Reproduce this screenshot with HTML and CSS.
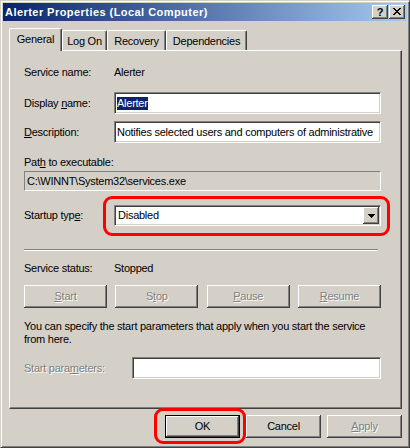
FILE: index.html
```html
<!DOCTYPE html>
<html>
<head>
<meta charset="utf-8">
<title>Alerter Properties (Local Computer)</title>
<link rel="stylesheet" href="styles.css">
</head>
<body>
<div class="window">
  <div class="titlebar">
    <span class="title">Alerter Properties (Local Computer)</span>
    <div class="capbtns">
      <div class="capbtn help">?</div>
      <div class="capbtn close">
        <svg width="8" height="7" viewBox="0 0 8 7" shape-rendering="crispEdges">
          <path fill="#000" d="M0 0h2v1H0zM6 0h2v1H6zM1 1h2v1H1zM5 1h2v1H5zM2 2h4v1H2zM3 3h2v1H3zM2 4h4v1H2zM1 5h2v1H1zM5 5h2v1H5zM0 6h2v1H0zM6 6h2v1H6z"/>
        </svg>
      </div>
    </div>
  </div>
  <div class="client">
    <div class="tabs">
      <div class="tab selected t-general">General</div>
      <div class="tab t-logon">Log On</div>
      <div class="tab t-recovery">Recovery</div>
      <div class="tab t-deps">Dependencies</div>
    </div>
    <div class="panel">
      <div class="row r-svcname"><span class="label">Service name:</span><span>Alerter</span></div>
      <div class="row r-display"><span class="label">Display <u>n</u>ame:</span><div class="edit"><span class="sel">Alerter</span></div></div>
      <div class="row r-desc"><span class="label"><u>D</u>escription:</span><div class="edit">Notifies selected users and computers of administrative</div></div>
      <div class="r-pathlabel">Pat<u>h</u> to executable:</div>
      <div class="pathbox">C:\WINNT\System32\services.exe</div>
      <div class="row r-startup"><span class="label">Startup typ<u>e</u>:</span>
        <div class="combo"><span class="combo-text">Disabled</span>
          <div class="dropbtn">
            <svg width="7" height="4" viewBox="0 0 7 4" shape-rendering="crispEdges"><path fill="#000" d="M0 0h7v1H0zM1 1h5v1H1zM2 2h3v1H2zM3 3h1v1H3z"/></svg>
          </div>
        </div>
      </div>
      <div class="separator"></div>
      <div class="row r-status"><span class="label">Service status:</span><span>Stopped</span></div>
      <div class="btnrow">
        <div class="btn disabled"><span><u>S</u>tart</span></div>
        <div class="btn disabled"><span>S<u>t</u>op</span></div>
        <div class="btn disabled"><span><u>P</u>ause</span></div>
        <div class="btn disabled"><span><u>R</u>esume</span></div>
      </div>
      <p class="hint">You can specify the start parameters that apply when you start the service<br>from here.</p>
      <div class="row r-params"><span class="label disabled">Start para<u>m</u>eters:</span><div class="edit params"></div></div>
    </div>
    <div class="dlgbtns">
      <div class="btn dlg default">OK</div>
      <div class="btn dlg">Cancel</div>
      <div class="btn dlg disabled"><span><u>A</u>pply</span></div>
    </div>
  </div>
</div>
<div class="mark mark-startup"></div>
<div class="mark mark-ok"></div>
</body>
</html>
```
FILE: styles.css
```css
* { box-sizing: border-box; }
html, body { margin: 0; padding: 0; }
body {
  width: 410px;
  height: 448px;
  overflow: hidden;
  background: #d4d0c8;
  font-family: "Liberation Sans", Arial, sans-serif;
  font-size: 11px;
  line-height: 13px;
  letter-spacing: -0.25px;
  color: #000;
}
u { text-decoration: underline; text-underline-offset: 1px; }

.window {
  width: 410px;
  height: 448px;
  background: #d4d0c8;
  border: 1px solid;
  border-color: #d4d0c8 #404040 #404040 #d4d0c8;
  box-shadow: inset 1px 1px #fff, inset -1px -1px #808080;
  padding: 2px;
}

.titlebar {
  height: 18px;
  display: flex;
  align-items: center;
  padding: 0 2px 0 2px;
  background: linear-gradient(to right, #0a246a, #a6caf0);
  color: #fff;
  font-weight: bold;
}
.title { white-space: nowrap; letter-spacing: 0.45px; }
.capbtns { margin-left: auto; display: flex; gap: 1px; }
.capbtn {
  width: 16px;
  height: 14px;
  background: #d4d0c8;
  box-shadow: inset -1px -1px #404040, inset 1px 1px #fff, inset -2px -2px #808080;
  display: flex;
  align-items: center;
  justify-content: center;
  color: #000;
  letter-spacing: 0;
}
.capbtn.help { font-size: 11px; font-weight: bold; line-height: 14px; padding-bottom: 1px; }
.capbtn.close svg { margin-top: -1px; }

.client { padding: 7px 5px 0 6px; }

.tabs { display: flex; align-items: flex-end; height: 22px; }
.tab {
  height: 20px;
  border-top: 1px solid #fff;
  border-left: 1px solid #fff;
  border-right: 1px solid #404040;
  box-shadow: inset -1px 0 #808080;
  border-radius: 2px 2px 0 0;
  display: flex;
  align-items: center;
  justify-content: center;
  padding-top: 1px;
  white-space: nowrap;
}
.tab.selected {
  height: 23px;
  margin-bottom: -1px;
  position: relative;
  z-index: 1;
  background: #d4d0c8;
  padding-top: 0;
  padding-bottom: 2px;
}
.t-general { width: 53px; }
.t-logon { width: 45px; }
.t-recovery { width: 59px; }
.t-deps { width: 81px; }

.panel {
  height: 359px;
  background: #d4d0c8;
  border: 1px solid;
  border-color: #fff #404040 #404040 #fff;
  box-shadow: inset -1px -1px #808080;
  padding: 0 20px 0 14px;
  display: flex;
  flex-direction: column;
}

.row { display: flex; align-items: center; }
.label { width: 90px; flex: none; white-space: nowrap; }
.r-svcname { height: 13px; margin-top: 15px; }
.r-display { height: 22px; margin-top: 13px; }
.r-desc { height: 22px; margin-top: 7px; }
.r-pathlabel { height: 13px; margin-top: 13px; }
.pathbox {
  height: 20px;
  margin-top: 2px;
  border: 1px solid;
  border-color: #808080 #fff #fff #808080;
  padding: 0 2px;
  display: flex;
  align-items: center;
  white-space: nowrap;
}
.r-startup { height: 21px; margin-top: 14px; }
.separator {
  height: 2px;
  margin-top: 23px;
  margin-right: 3px;
  border-top: 1px solid #808080;
  border-bottom: 1px solid #fff;
}
.r-status { height: 13px; margin-top: 11px; }

.edit {
  flex: 1;
  height: 100%;
  background: #fff;
  border: 1px solid;
  border-color: #808080 #fff #fff #808080;
  box-shadow: inset 1px 1px #404040, inset -1px -1px #d4d0c8;
  padding: 0 2px;
  display: flex;
  align-items: center;
  white-space: nowrap;
  overflow: hidden;
}
.sel { background: #0a246a; color: #fff; }

.combo {
  flex: 1;
  height: 100%;
  background: #fff;
  border: 1px solid;
  border-color: #808080 #fff #fff #808080;
  box-shadow: inset 1px 1px #404040, inset -1px -1px #d4d0c8;
  padding: 2px 1px 2px 3px;
  display: flex;
  align-items: center;
}
.dropbtn {
  margin-left: auto;
  width: 16px;
  height: 17px;
  background: #d4d0c8;
  box-shadow: inset -1px -1px #404040, inset 1px 1px #fff, inset -2px -2px #808080;
  display: flex;
  align-items: center;
  justify-content: center;
}

.btnrow {
  margin-top: 10px;
  display: flex;
  justify-content: space-between;
}
.btn {
  width: 83px;
  height: 23px;
  flex: none;
  background: #d4d0c8;
  box-shadow: inset -1px -1px #404040, inset 1px 1px #fff, inset -2px -2px #808080;
  display: flex;
  align-items: center;
  justify-content: center;
  white-space: nowrap;
}
.disabled { color: #808080; text-shadow: 1px 1px 0 #fff; }

.hint { margin: 12px 0 0 0; height: 26px; white-space: nowrap; }
.r-params { height: 22px; margin-top: 11px; }
.r-params .label { width: 108px; }

.dlgbtns {
  display: flex;
  justify-content: flex-end;
  gap: 6px;
  margin-top: 6px;
}
.btn.dlg { width: 75px; }
.btn.default {
  border: 1px solid #000;
  box-shadow: inset -1px -1px #404040, inset 1px 1px #fff, inset -2px -2px #808080;
}

.mark {
  position: absolute;
  border: 3px solid #ff0000;
  border-radius: 9px;
  pointer-events: none;
}
.mark-startup { left: 103px; top: 196px; width: 287px; height: 40px; }
.mark-ok { left: 154px; top: 408px; width: 92px; height: 36px; }
```
